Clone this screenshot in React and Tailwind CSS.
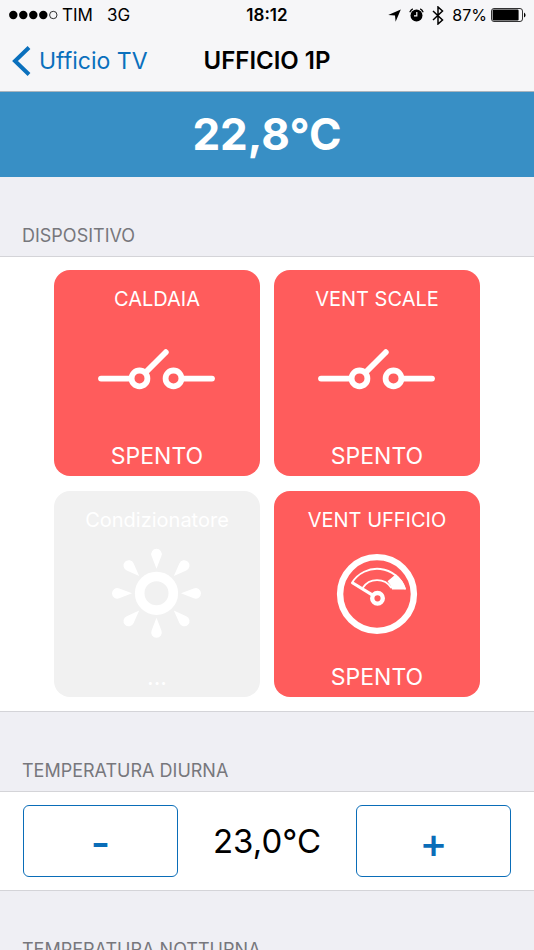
import React, { useState } from "react";

const formatTemp = (value) => `${value.toFixed(1).replace(".", ",")}°C`;

function SwitchIcon() {
  return (
    <svg viewBox="0 0 206 128" className="w-full" fill="none" stroke="currentColor" aria-hidden="true">
      <g strokeWidth="5.8" strokeLinecap="round">
        <path d="M47 66.6H76" />
        <path d="M128 66.6h30" />
        <path d="M92 60l19.8-19.8" />
      </g>
      <circle cx="85.5" cy="66.4" r="7.9" strokeWidth="5.8" />
      <circle cx="119.5" cy="66.4" r="7.9" strokeWidth="5.8" />
    </svg>
  );
}

function SunIcon() {
  return (
    <svg viewBox="0 0 206 128" className="w-full" fill="none" aria-hidden="true">
      <circle cx="102.5" cy="60.3" r="16.8" stroke="currentColor" strokeWidth="9.6" />
      {[0, 45, 90, 135, 180, 225, 270, 315].map((angle) => (
        <path
          key={angle}
          transform={`translate(102.5 60.3) rotate(${angle})`}
          d="M0-24.5-4.9-37.2A5.3 5.3 0 1 1 4.9-37.2Z"
          fill="currentColor"
        />
      ))}
    </svg>
  );
}

function GaugeIcon() {
  return (
    <svg viewBox="0 0 206 128" className="w-full" fill="none" stroke="currentColor" aria-hidden="true">
      <circle cx="103" cy="61" r="36.9" strokeWidth="6.4" />
      <circle cx="103.5" cy="65.3" r="5.3" strokeWidth="4.4" />
      <path d="M99 62.3 78 49.5" strokeWidth="3.2" />
      <path d="M78 49.7A29.6 29.6 0 0 1 131 55.5" strokeWidth="1.9" strokeLinecap="round" />
      <path d="M88.6 55A17.2 17.2 0 0 1 117.5 55" strokeWidth="1.9" />
      <path d="M113.5 48.3 121.8 41.2A28.5 28.5 0 0 1 131.8 56.4H118A17 17 0 0 0 113.5 48.3Z" fill="currentColor" stroke="none" />
    </svg>
  );
}

const DEVICES = [
  { name: "CALDAIA", status: "SPENTO", Icon: SwitchIcon },
  { name: "VENT SCALE", status: "SPENTO", Icon: SwitchIcon },
  { name: "Condizionatore", status: "...", Icon: SunIcon, disabled: true },
  { name: "VENT UFFICIO", status: "SPENTO", Icon: GaugeIcon },
];

function StatusBar() {
  return (
    <div className="grid h-[30px] grid-cols-3 items-center px-2 text-[17px] leading-5">
      <div className="flex items-center">
        <svg viewBox="0 0 50 10" className="mr-1 h-[10px] w-[50px]" aria-hidden="true">
          <circle cx="5.3" cy="5" r="4.2" />
          <circle cx="15.3" cy="5" r="4.2" />
          <circle cx="25.3" cy="5" r="4.2" />
          <circle cx="35.3" cy="5" r="4.2" />
          <circle cx="45.3" cy="5" r="3.7" fill="none" stroke="currentColor" strokeWidth="0.8" />
        </svg>
        <span>TIM</span>
        <span className="ml-[14px]">3G</span>
      </div>
      <span className="text-center font-semibold">18:12</span>
      <div className="flex items-center justify-end">
        <svg viewBox="0 0 13 13" className="mr-2 h-[13px] w-[13px]" aria-hidden="true">
          <path d="M12.8.4 7.6 12.8 7 6.4.2 6Z" />
        </svg>
        <svg viewBox="0 0 15 14" className="mr-2 h-[14px] w-[15px]" aria-hidden="true">
          <circle cx="7.5" cy="7.5" r="6" />
          <path d="M.8 4.2Q1.6 1.9 3.8.9M14.2 4.2Q13.4 1.9 11.2.9" fill="none" stroke="currentColor" strokeWidth="1.2" />
          <path d="M7.8 4v3.8H5" fill="none" stroke="#f7f7f8" strokeWidth="1.2" />
        </svg>
        <svg viewBox="0 0 12 19" className="mr-2 h-[19px] w-[12px]" fill="none" stroke="currentColor" strokeWidth="1.5" aria-hidden="true">
          <path d="M1 5l9.5 9L6 18V1l4.5 4L1 14" />
        </svg>
        <span className="text-[16px]">87%</span>
        <svg viewBox="0 0 35 14" className="ml-1 h-[14px] w-[35px]" aria-hidden="true">
          <rect x=".5" y=".5" width="31" height="13" rx="2.5" fill="none" stroke="currentColor" strokeWidth="0.8" />
          <rect x="1.6" y="1.6" width="26" height="10.8" rx="1.2" />
          <path d="M33 4.5q1.6 1 1.6 2.5T33 9.5Z" />
        </svg>
      </div>
    </div>
  );
}

function SectionTitle({ children }) {
  return (
    <h2 className="border-b border-[#d4d4d8] px-[22px] pt-[49px] pb-[10px] text-[18px] leading-5 text-[#77777c]">
      {children}
    </h2>
  );
}

function DeviceTile({ device }) {
  const { name, status, Icon, disabled } = device;

  return (
    <button
      type="button"
      disabled={disabled}
      className={`flex flex-col items-center rounded-2xl pt-4 pb-1 text-white ${
        disabled ? "bg-[#f1f1f1]" : "bg-[#ff5c5c]"
      }`}
    >
      <span className="text-[20px] leading-[26px]">{name}</span>
      <Icon />
      <span className="text-[23px] leading-8">{status}</span>
    </button>
  );
}

function TemperatureRow({ value, onChange }) {
  const buttonClass =
    "h-[72px] rounded-md border border-[#0a6db8] pt-1 text-[42px] leading-10 font-medium text-[#0a6db8]";

  return (
    <div className="grid grid-cols-[155fr_178fr_155fr] items-center border-b border-[#d4d4d8] bg-white px-[23px] py-[13px]">
      <button type="button" aria-label="Diminuisci" className={buttonClass} onClick={() => onChange(value - 0.5)}>
        -
      </button>
      <output className="text-center text-[33px] leading-10">{formatTemp(value)}</output>
      <button type="button" aria-label="Aumenta" className={buttonClass} onClick={() => onChange(value + 0.5)}>
        +
      </button>
    </div>
  );
}

export default function App() {
  const [dayTemp, setDayTemp] = useState(23);
  const [nightTemp, setNightTemp] = useState(18);

  return (
    <div className="flex h-screen flex-col bg-[#efeff4] font-['Inter',sans-serif] text-black">
      {/* HEADER */}
      <header className="shrink-0 border-b border-[#a9b4bd] bg-[#f6f6f8]">
        <StatusBar />
        <nav className="grid h-[61px] grid-cols-[1fr_auto_1fr] items-center px-3 text-[23px] leading-7">
          <a href="#" className="flex items-center gap-2 text-[#0a70bd]">
            <svg viewBox="0 0 19 30" className="h-[30px] w-[19px]" fill="none" stroke="currentColor" strokeWidth="4" aria-hidden="true">
              <path d="M17 1.5 3 15l14 13.5" />
            </svg>
            Ufficio TV
          </a>
          <h1 className="text-[24px] font-semibold">UFFICIO 1P</h1>
        </nav>
      </header>

      <main className="min-h-0 flex-1 overflow-y-auto [scrollbar-width:none]">
        {/* CURRENT TEMPERATURE */}
        <p className="bg-[#388fc5] pt-[18px] pb-[19px] text-center text-[44px] leading-[48px] font-bold text-white">
          22,8°C
        </p>

        {/* DEVICES */}
        <section>
          <SectionTitle>DISPOSITIVO</SectionTitle>
          <div className="grid grid-cols-[206px_206px] justify-center gap-x-[14px] gap-y-[15px] border-b border-[#d4d4d8] bg-white pt-[13px] pb-[14px]">
            {DEVICES.map((device) => (
              <DeviceTile key={device.name} device={device} />
            ))}
          </div>
        </section>

        {/* DAY TEMPERATURE */}
        <section>
          <SectionTitle>TEMPERATURA DIURNA</SectionTitle>
          <TemperatureRow value={dayTemp} onChange={setDayTemp} />
        </section>

        {/* NIGHT TEMPERATURE */}
        <section>
          <SectionTitle>TEMPERATURA NOTTURNA</SectionTitle>
          <TemperatureRow value={nightTemp} onChange={setNightTemp} />
        </section>
      </main>
    </div>
  );
}
